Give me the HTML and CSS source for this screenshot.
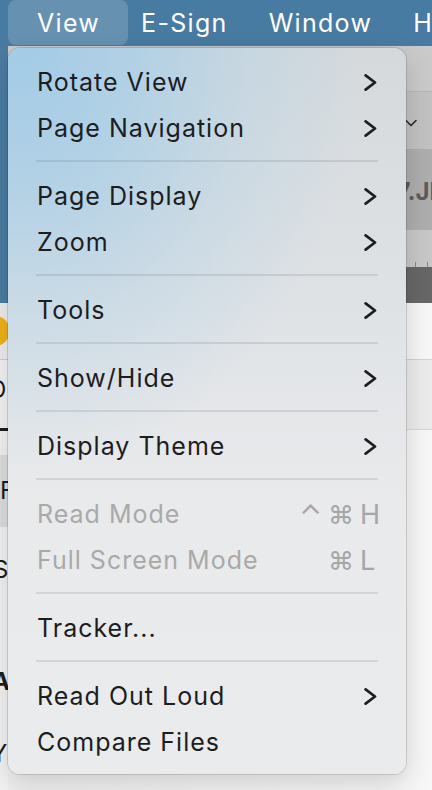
FILE: index.html
```html
<!DOCTYPE html>
<html lang="en">
<head>
<meta charset="utf-8">
<title>View menu</title>
<link rel="stylesheet" href="styles.css">
</head>
<body>
<div class="screen">
  <header class="menubar">
    <span class="mb-item active">View</span>
    <span class="mb-item">E-Sign</span>
    <span class="mb-item">Window</span>
    <span class="mb-item">Help</span>
  </header>

  <div class="app">
    <aside class="edge">
      <div class="edge-blue"></div>
      <div class="edge-doc"><span class="dot"></span></div>
      <div class="edge-tab"><span class="edge-letter shift">D</span></div>
      <div class="edge-bar"></div>
      <div class="edge-gap"></div>
      <div class="edge-band"><span class="edge-letter">F</span></div>
      <div class="edge-rest">
        <span class="edge-letter s">S</span>
        <span class="edge-letter a">A</span>
        <span class="edge-letter y">Y</span>
      </div>
    </aside>

    <main class="main">
      <div class="tb tb1"></div>
      <div class="tb tb2">
        <svg class="drop" viewBox="0 0 12 8" width="12" height="8"><path d="M1 1.5 L6 6.5 L11 1.5" fill="none" stroke="#2a2a2a" stroke-width="1.6" stroke-linecap="round" stroke-linejoin="round"/></svg>
      </div>
      <div class="tb tb3"><span class="fname">IMG_2017.JPG</span></div>
      <div class="tb ruler"></div>
      <div class="tb dark"></div>
      <div class="doc1"></div>
      <div class="doc2"></div>
      <div class="doc-rest"></div>
    </main>
  </div>

  <nav class="menu">
    <div class="item"><span class="label">Rotate View</span><svg class="chev" viewBox="0 0 14 19" width="14" height="19"><path d="M1.6 2.4 L11 9.5 L1.6 16.6" /></svg></div>
    <div class="item"><span class="label">Page Navigation</span><svg class="chev" viewBox="0 0 14 19" width="14" height="19"><path d="M1.6 2.4 L11 9.5 L1.6 16.6" /></svg></div>
    <div class="sep"></div>
    <div class="item"><span class="label">Page Display</span><svg class="chev" viewBox="0 0 14 19" width="14" height="19"><path d="M1.6 2.4 L11 9.5 L1.6 16.6" /></svg></div>
    <div class="item"><span class="label">Zoom</span><svg class="chev" viewBox="0 0 14 19" width="14" height="19"><path d="M1.6 2.4 L11 9.5 L1.6 16.6" /></svg></div>
    <div class="sep"></div>
    <div class="item"><span class="label">Tools</span><svg class="chev" viewBox="0 0 14 19" width="14" height="19"><path d="M1.6 2.4 L11 9.5 L1.6 16.6" /></svg></div>
    <div class="sep"></div>
    <div class="item"><span class="label">Show/Hide</span><svg class="chev" viewBox="0 0 14 19" width="14" height="19"><path d="M1.6 2.4 L11 9.5 L1.6 16.6" /></svg></div>
    <div class="sep"></div>
    <div class="item"><span class="label">Display Theme</span><svg class="chev" viewBox="0 0 14 19" width="14" height="19"><path d="M1.6 2.4 L11 9.5 L1.6 16.6" /></svg></div>
    <div class="sep"></div>
    <div class="item disabled"><span class="label">Read Mode</span><span class="shortcut"><span class="mods"><span class="ctrl">⌃</span><span class="cmd">⌘</span></span><span class="key">H</span></span></div>
    <div class="item disabled"><span class="label">Full Screen Mode</span><span class="shortcut"><span class="mods"><span class="cmd">⌘</span></span><span class="key">L</span></span></div>
    <div class="sep"></div>
    <div class="item"><span class="label">Tracker...</span></div>
    <div class="sep"></div>
    <div class="item"><span class="label">Read Out Loud</span><svg class="chev" viewBox="0 0 14 19" width="14" height="19"><path d="M1.6 2.4 L11 9.5 L1.6 16.6" /></svg></div>
    <div class="item"><span class="label">Compare Files</span></div>
  </nav>
</div>
</body>
</html>
```

FILE: styles.css
```css
* {
  box-sizing: border-box;
  margin: 0;
  padding: 0;
}

html,
body {
  width: 432px;
  height: 790px;
  overflow: hidden;
}

body {
  font-family: Inter, "Noto Sans", "DejaVu Sans", sans-serif;
  background: #f3f3f3;
}

.screen {
  position: relative;
  width: 432px;
  height: 790px;
  display: flex;
  flex-direction: column;
  overflow: hidden;
}

/* ---------- menu bar ---------- */
.menubar {
  height: 46px;
  flex: none;
  display: flex;
  align-items: flex-start;
  padding-left: 16px;
  background: #487ba1;
  color: #ffffff;
  font-size: 25px;
  letter-spacing: 1.3px;
  white-space: nowrap;
  overflow: hidden;
}

.mb-item {
  height: 46px;
  line-height: 46px;
  padding: 0 20px 0 21px;
}

.mb-item.active {
  height: 45px;
  line-height: 46px;
  padding: 0 28px 0 29px;
  margin: 0 -8px 0 -8px;
  border-radius: 8px;
  background: rgba(255, 255, 255, 0.17);
}

/* ---------- app behind ---------- */
.app {
  flex: 1;
  display: flex;
  min-height: 0;
}

.edge {
  width: 8px;
  flex: none;
  display: flex;
  flex-direction: column;
  overflow: hidden;
  font-size: 24px;
  color: #1c1c1c;
}

.edge-blue {
  height: 257px;
  background: #4a7ca2;
}

.edge-doc {
  height: 57px;
  background: #eeeeee;
  border-bottom: 1px solid #cfcfcf;
  padding-top: 13px;
}

.dot {
  display: block;
  width: 30px;
  height: 30px;
  margin-left: -20px;
  border-radius: 50%;
  background: #f0b21a;
}

.edge-tab {
  height: 68px;
  background: #f4f4f4;
  padding-top: 16px;
}

.edge-letter {
  display: block;
  line-height: 28px;
  white-space: nowrap;
}

.edge-letter.shift {
  margin-left: -11px;
}

.edge-bar {
  height: 3px;
  background: #1d1d1d;
}

.edge-gap {
  height: 24px;
  background: #f3f3f3;
}

.edge-band {
  height: 72px;
  background: #dedede;
  padding-top: 22px;
}

.edge-rest {
  flex: 1;
  background: #f3f3f3;
  padding-top: 29px;
}

.edge-letter.s {
  margin-left: -7px;
}

.edge-letter.a {
  margin-top: 84px;
  margin-left: -8px;
  font-weight: 700;
}

.edge-letter.y {
  margin-top: 44px;
  margin-left: -9px;
}

.main {
  flex: 1;
  display: flex;
  flex-direction: column;
  min-width: 0;
}

.tb {
  flex: none;
  display: flex;
  align-items: center;
}

.tb1 {
  height: 46px;
  background: #cacaca;
  border-bottom: 1px solid #b7b7b7;
}

.tb2 {
  height: 58px;
  background: #c2c2c2;
  border-bottom: 1px solid #acacac;
  justify-content: flex-end;
  padding-right: 15px;
}

.drop {
  margin-top: 4px;
}

.tb3 {
  height: 80px;
  background: #aeaeae;
  justify-content: flex-end;
  white-space: nowrap;
  overflow: hidden;
}

.fname {
  flex: none;
  font-size: 24px;
  font-weight: 700;
  color: #5c5c5c;
  margin-top: 2px;
  margin-right: -31px;
}

.ruler {
  height: 37px;
  background:
    repeating-linear-gradient(90deg, transparent 0 11px, #8a8a8a 11px 12px) bottom / 100% 5px no-repeat,
    #c8c8c8;
}

.dark {
  height: 36px;
  background: #676767;
}

.doc1 {
  height: 57px;
  background: #f7f7f7;
  border-bottom: 1px solid #d4d4d4;
}

.doc2 {
  height: 70px;
  background: #ececec;
  border-bottom: 1px solid #d6d6d6;
}

.doc-rest {
  flex: 1;
  background: linear-gradient(90deg, #f0f0f0, #f7f7f7);
}

/* ---------- dropdown menu ---------- */
.menu {
  position: absolute;
  left: 8px;
  top: 48px;
  width: 398px;
  padding: 11px 0 9px;
  border-radius: 12px;
  background:
    radial-gradient(ellipse 85% 58% at 4% 0%,
      rgba(163, 204, 231, 1) 0%,
      rgba(168, 206, 231, 0.82) 30%,
      rgba(178, 210, 230, 0.42) 65%,
      rgba(190, 214, 230, 0) 100%),
    linear-gradient(180deg, #d5d9dc 0%, #e0e3e6 38%, #e9eaec 62%, #eaebed 100%);
  box-shadow:
    0 0 0 1px rgba(0, 0, 0, 0.13),
    0 10px 28px rgba(0, 0, 0, 0.16);
}

.item {
  height: 46px;
  display: flex;
  align-items: center;
  padding: 0 28px 0 29px;
  font-size: 25px;
  letter-spacing: 1px;
  color: #1d1d1f;
  white-space: nowrap;
}

.item .label {
  flex: 1;
}

.item.disabled {
  color: #a9a9a9;
}

.chev {
  flex: none;
  fill: none;
  stroke: #1e1e1e;
  stroke-width: 2.7;
  stroke-linecap: round;
  stroke-linejoin: round;
}

.shortcut {
  display: flex;
  align-items: center;
  color: #a6a6a6;
  letter-spacing: 0;
}

.mods {
  display: flex;
  align-items: center;
  gap: 6px;
}

.ctrl {
  font-family: Inter, "DejaVu Sans", sans-serif;
  font-size: 29px;
  line-height: 46px;
  margin-top: 2px;
}

.cmd {
  font-family: Inter, "DejaVu Sans", sans-serif;
  font-size: 26px;
}

.key {
  width: 18px;
  margin-left: 6px;
  font-size: 27px;
}

.sep {
  height: 2px;
  margin: 9px 28px 11px;
  background: rgba(0, 0, 0, 0.09);
}
```
